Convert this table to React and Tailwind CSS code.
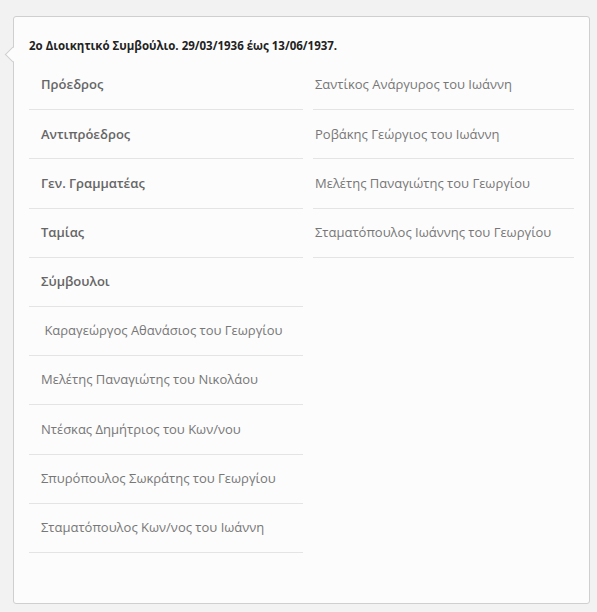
const left = [
  { text: "Πρόεδρος", label: true },
  { text: "Αντιπρόεδρος", label: true },
  { text: "Γεν. Γραμματέας", label: true },
  { text: "Ταμίας", label: true },
  { text: "Σύμβουλοι", label: true },
  { text: "\u00a0Καραγεώργος Αθανάσιος του Γεωργίου" },
  { text: "Μελέτης Παναγιώτης του Νικολάου" },
  { text: "Ντέσκας Δημήτριος του Κων/νου" },
  { text: "Σπυρόπουλος Σωκράτης του Γεωργίου" },
  { text: "Σταματόπουλος Κων/νος του Ιωάννη" },
];

const right = [
  "Σαντίκος Ανάργυρος του Ιωάννη",
  "Ροβάκης Γεώργιος του Ιωάννη",
  "Μελέτης Παναγιώτης του Γεωργίου",
  "Σταματόπουλος Ιωάννης του Γεωργίου",
];

export default function App() {
  return (
    <div
      className="min-h-[612px] bg-[#f2f2f2] pt-[16px] pl-[13px]"
      style={{ fontFamily: '"Open Sans", "Noto Sans", sans-serif' }}
    >
      <div className="relative w-[577px] h-[588px] rounded-[3px] border border-[#cfcfcf] bg-[#fcfcfc] px-[15px] pt-[20px]">
        {/* little pointer on the left */}
        <div className="absolute left-[-7px] top-[32px] h-[11px] w-[11px] rotate-45 border-b border-l border-[#cfcfcf] bg-[#fcfcfc]" />

        <h3 className="text-[11.5px] leading-[18px] font-bold text-[#222]">
          2o Διοικητικό Συμβούλιο. 29/03/1936 έως 13/06/1937.
        </h3>

        <div className="mt-[6px] grid grid-cols-[274px_261px] gap-x-[10px] items-start">
          <div>
            {left.map((row) => (
              <div
                key={row.text}
                className={`flex h-[49.2px] items-center border-b border-[#e4e4e4] pl-[12px] text-[13px] ${
                  row.label ? "font-semibold text-[#666]" : "text-[#777]"
                }`}
              >
                {row.text}
              </div>
            ))}
          </div>
          <div>
            {right.map((name) => (
              <div
                key={name}
                className="flex h-[49.2px] items-center border-b border-[#e4e4e4] pl-[2px] text-[13px] text-[#777]"
              >
                {name}
              </div>
            ))}
          </div>
        </div>
      </div>
    </div>
  );
}
